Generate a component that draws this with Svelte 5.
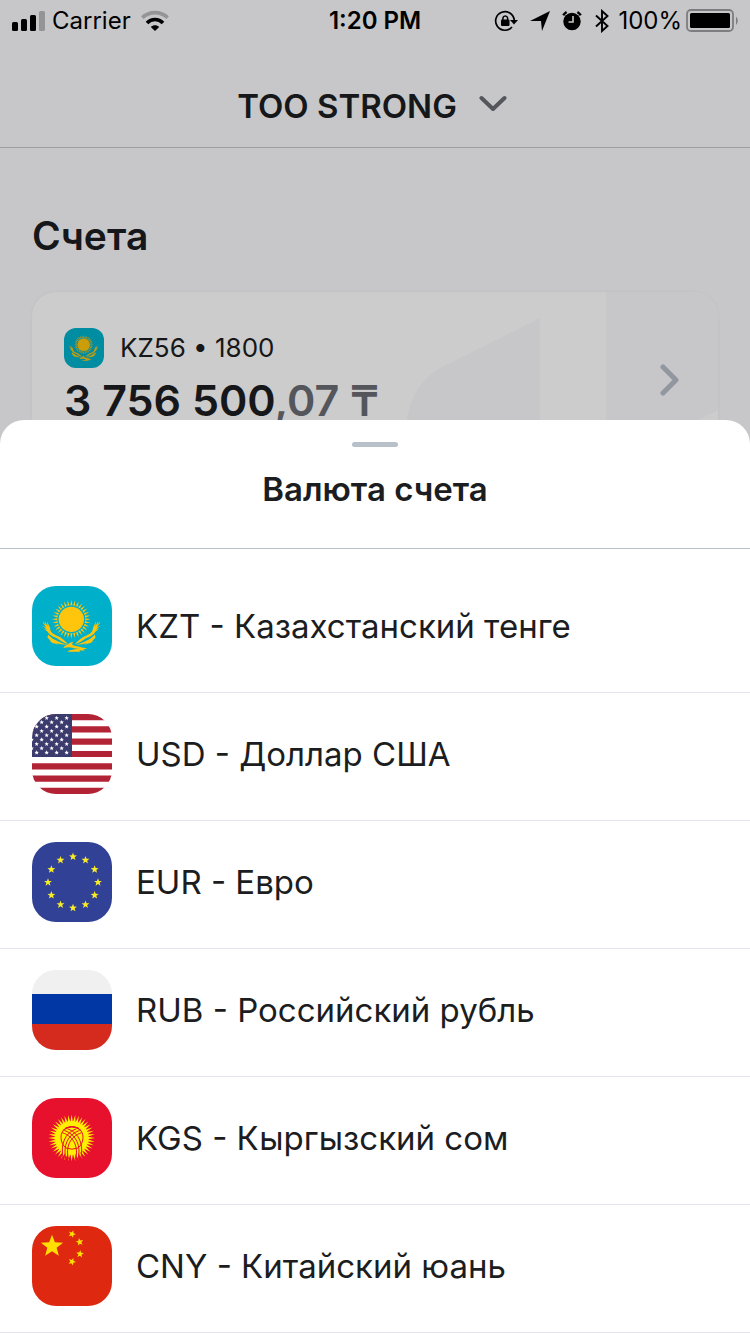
<script>
  const currencies = [
    { code: 'KZT', name: 'Казахстанский тенге' },
    { code: 'USD', name: 'Доллар США' },
    { code: 'EUR', name: 'Евро' },
    { code: 'RUB', name: 'Российский рубль' },
    { code: 'KGS', name: 'Кыргызский сом' },
    { code: 'CNY', name: 'Китайский юань' }
  ];

  const round = (n) => Math.round(n * 100) / 100;

  // Five-pointed star around (cx, cy), turned by `turn` degrees.
  function star(cx, cy, r, turn = 0) {
    const pts = [];
    for (let i = 0; i < 10; i++) {
      const a = ((i * 36 - 90 + turn) * Math.PI) / 180;
      const d = i % 2 ? r * 0.42 : r;
      pts.push(`${round(cx + d * Math.cos(a))},${round(cy + d * Math.sin(a))}`);
    }
    return pts.join(' ');
  }

  // Ring of pointed sun rays.
  function rays(cx, cy, inner, outer, count, width) {
    let d = '';
    for (let i = 0; i < count; i++) {
      const a = (i * 2 * Math.PI) / count - Math.PI / 2;
      const p = (r, t) => `${round(cx + r * Math.cos(t))} ${round(cy + r * Math.sin(t))}`;
      d += `M${p(inner, a - width)}L${p(outer, a)}L${p(inner, a + width)}Z`;
    }
    return d;
  }

  const usStars = [];
  for (let row = 0; row < 9; row++) {
    for (let col = 0; col < 4; col++) {
      usStars.push(star((row % 2 ? 35 : 50) + col * 30 - 36, 12 + row * 13, 7));
    }
  }

  const euStars = Array.from({ length: 12 }, (_, i) => {
    const a = (i * Math.PI) / 6;
    return star(123 + 75 * Math.cos(a), 121 + 77 * Math.sin(a), 12.5);
  });
</script>

{#snippet flag(code)}
  <svg class="flag" viewBox="0 0 240 240" aria-hidden="true">
    {#if code === 'KZT'}
      <rect width="240" height="240" fill="#00afca" />
      <g fill="#fec50c">
        <circle cx="118" cy="100" r="38" />
        <path d={rays(118, 100, 42, 58, 32, 0.075)} />
        <path d="M33 105 L41 119 L38 105 L47 121 L45 106 L54 126 C55 139 63 144 75 149 C89 154 98 163 108 174 C91 170 84 161 72 155 C61 151 51 145 47 137 L36 129 L45 131 L31 119 L43 125 L34 112 Z" />
        <path d="M204 105 L196 119 L199 105 L190 121 L192 106 L183 126 C182 139 174 144 162 149 C148 154 139 163 129 174 C146 170 153 161 165 155 C176 151 186 145 190 137 L201 129 L192 131 L206 119 L194 125 L203 112 Z" />
        <path d="M49 146 C63 162 78 164 91 172 L108 176 L86 175 L72 171 L81 177 L62 170 L68 175 L52 165 L58 167 L46 154 Z" />
        <path d="M188 146 C174 162 160 164 147 172 L130 176 L151 175 L165 171 L156 177 L175 170 L169 175 L185 165 L179 167 L191 154 Z" />
        <path d="M94 186 C98 177 106 178 114 170 L123 167 L120 176 C135 181 148 184 166 187 L153 191 L159 194 L141 193 L146 197 L106 197 L113 193 L130 190 L145 188 C128 190 119 183 109 184 Z" />
      </g>
    {:else if code === 'USD'}
      <rect width="240" height="240" fill="#fff" />
      <path
        fill="#b22335"
        d="M0 0H240V18.5H0ZM0 37H240V55.4H0ZM0 73.8H240V92.3H0ZM0 110.8H240V129.2H0ZM0 147.7H240V166.2H0ZM0 184.6H240V203H0ZM0 221.5H240V240H0Z"
      />
      <rect width="120" height="129" fill="#3c3b6e" />
      {#each usStars as points}<polygon {points} fill="#fff" />{/each}
    {:else if code === 'EUR'}
      <rect width="240" height="240" fill="#304196" />
      {#each euStars as points}<polygon {points} fill="#f9ec24" />{/each}
    {:else if code === 'RUB'}
      <rect width="240" height="240" fill="#f0f0f0" />
      <rect y="72" width="240" height="90" fill="#0037a5" />
      <rect y="162" width="240" height="78" fill="#d52b1e" />
    {:else if code === 'KGS'}
      <rect width="240" height="240" fill="#e8112d" />
      <path d={rays(119, 120, 48, 70, 40, 0.078)} fill="#ffef00" />
      <circle cx="119" cy="120" r="50" fill="#ffef00" />
      <g fill="none" stroke="#e8112d" stroke-width="3">
        <path d="M87 118C87 75 153 75 153 118C153 134 146 143 138 150Q120 157 102 150C94 143 87 134 87 118Z" />
        <path d="M93 97Q120 77 147 97M100 90Q120 81 140 90" />
        <path d="M94 184C84 140 98 104 134 92M102 186C92 144 106 110 143 97M110 184C100 150 112 116 149 104" />
        <path d="M146 184C156 140 142 104 106 92M138 186C148 144 134 110 97 97M130 184C140 150 128 116 91 104" />
      </g>
    {:else}
      <rect width="240" height="240" fill="#de2910" />
      <g fill="#ffde00">
        <polygon points={star(60, 61, 35)} />
        <polygon points={star(120, 24, 12, 20)} />
        <polygon points={star(143, 48, 12, -10)} />
        <polygon points={star(144, 84, 12, 5)} />
        <polygon points={star(120, 107, 12, 22)} />
      </g>
    {/if}
  </svg>
{/snippet}

<div class="screen">
  <main class="page">
    <header class="topbar">
      <button class="company" type="button">
        TOO STRONG
        <svg width="28" height="18" viewBox="0 0 28 18" aria-hidden="true">
          <path d="M2.500 3 14 14 25.500 3" fill="none" stroke="#696c73" stroke-width="4" stroke-linecap="round" stroke-linejoin="round" />
        </svg>
      </button>
    </header>

    <section class="accounts">
      <h1>Счета</h1>
      <a class="card" href="#account">
        <svg class="pattern" width="314" height="176" viewBox="0 0 314 176" aria-hidden="true">
          <path d="M136 26V176H2V140C2 112 16 85 40 74ZM202 0H314V118L202 176Z" fill="#f9f9fc" />
        </svg>
        <span class="summary">
          <span class="number">
            {@render flag('KZT')}
            KZ56 • 1800
          </span>
          <span class="balance">3 756 500<span class="minor">,07 ₸</span></span>
        </span>
        <svg class="go" width="20" height="32" viewBox="0 0 20 32" aria-hidden="true">
          <path d="M3 3 16 16 3 29" fill="none" stroke="#b6bdc6" stroke-width="5" stroke-linecap="round" stroke-linejoin="round" />
        </svg>
      </a>
    </section>
  </main>

  <div class="backdrop"></div>

  <div class="status">
    <div class="side">
      <svg width="34" height="22" viewBox="0 0 34 22" aria-hidden="true">
        <rect x="0" y="12" width="6" height="9" rx="1.5" />
        <rect x="9" y="9" width="6" height="12" rx="1.5" />
        <rect x="18" y="5" width="6" height="16" rx="1.5" />
        <rect x="27" y="1" width="6" height="20" rx="1.5" fill="#949496" />
      </svg>
      <span>Carrier</span>
      <svg class="wifi" width="28" height="22" viewBox="0 0 28 22" aria-hidden="true">
        <g fill="none" stroke-width="3.600">
          <path d="M1.300 7.600C8.500 .9 19.500 .9 26.700 7.600" stroke="#949496" />
          <path d="M6 13C10.500 8.300 17.500 8.300 22 13" stroke="#000" />
        </g>
        <path d="M14 21 9.800 17C12 14.600 16 14.600 18.200 17Z" />
      </svg>
    </div>
    <time>1:20 PM</time>
    <div class="side end">
      <svg width="24" height="22" viewBox="0 0 24 22" aria-hidden="true">
        <path d="M18 17A9.300 9.300 0 1 1 20.200 10" fill="none" stroke="#000" stroke-width="1.700" />
        <path d="M16 10H24L20 14.500Z" />
        <rect x="7" y="9.500" width="8.500" height="6.500" rx="1" />
        <path d="M8.900 10V8A2.400 2.600 0 0 1 13.600 8V10" fill="none" stroke="#000" stroke-width="1.500" />
      </svg>
      <svg width="20" height="22" viewBox="0 0 20 22" aria-hidden="true">
        <path d="M20 1 12 21 11 11H0Z" />
      </svg>
      <svg width="20" height="22" viewBox="0 0 20 22" aria-hidden="true">
        <circle cx="10" cy="11.500" r="8.700" />
        <path d="M1.200 5.200A13 13 0 0 1 4.600 1.900M15.400 1.900A13 13 0 0 1 18.800 5.200" fill="none" stroke="#000" stroke-width="2.400" />
        <path d="M11 6V12H6.500" fill="none" stroke="#c7c7c9" stroke-width="1.600" />
      </svg>
      <svg width="16" height="24" viewBox="0 0 16 24" aria-hidden="true">
        <path d="M2 6.500 13.500 17 8 22V2L13.500 7 2 17.500" fill="none" stroke="#000" stroke-width="1.900" />
      </svg>
      <span class="percent">100%</span>
      <svg width="54" height="24" viewBox="0 0 54 24" aria-hidden="true">
        <rect x="1" y="1" width="46" height="21" rx="4" fill="none" stroke="#7d7d7f" stroke-width="1.800" />
        <rect x="4" y="4" width="40" height="15" rx="1.500" />
        <path d="M50 7.500A6 6 0 0 1 50 16Z" fill="#7d7d7f" />
      </svg>
    </div>
  </div>

  <div class="sheet" role="dialog" aria-labelledby="sheet-title">
    <div class="sheet-head">
      <span class="grip"></span>
      <h2 id="sheet-title">Валюта счета</h2>
    </div>
    <ul>
      {#each currencies as { code, name }}
        <li>
          <button class="row" type="button">
            {@render flag(code)}
            <span>{code} - {name}</span>
          </button>
        </li>
      {/each}
    </ul>
  </div>
</div>

<style>
  :global(body) {
    margin: 0;
    background: #c7c7c9;
  }
  .screen {
    position: relative;
    min-height: 100vh;
    overflow: hidden;
    background: #f9f9fc;
    color: #1c1d21;
    font-family: Inter, "Liberation Sans", sans-serif;
  }
  button {
    padding: 0;
    border: 0;
    background: none;
    color: inherit;
    font: inherit;
    cursor: pointer;
  }
  svg {
    display: block;
    flex: none;
  }
  h1,
  h2 {
    margin: 0;
    font-weight: 600;
  }

  .status {
    position: absolute;
    inset: 0 0 auto;
    display: grid;
    grid-template-columns: 1fr auto 1fr;
    align-items: center;
    padding: 0 12px;
    color: #000;
    font-size: 24px;
    line-height: 41px;
  }
  .status time {
    font-weight: 600;
  }
  .side {
    display: flex;
    align-items: center;
    gap: 6px;
  }
  .wifi {
    margin-left: 4px;
  }
  .end {
    gap: 12px;
    justify-content: flex-end;
    margin-right: -2px;
  }
  .percent {
    margin: 0 -8px 0 -4px;
  }

  .topbar {
    display: flex;
    justify-content: center;
    box-sizing: border-box;
    height: 148px;
    padding-top: 84px;
    border-bottom: 1px solid #c6c6c9;
  }
  .company {
    display: flex;
    align-items: center;
    gap: 22px;
    height: 44px;
    margin-right: 6px;
    font-size: 33px;
    font-weight: 600;
  }
  .company svg {
    margin-bottom: 4px;
  }

  .accounts {
    padding: 64px 32px 0;
  }
  h1 {
    font-size: 39px;
    line-height: 48px;
  }
  .card {
    position: relative;
    display: flex;
    align-items: center;
    justify-content: space-between;
    box-sizing: border-box;
    height: 176px;
    margin-top: 32px;
    padding: 0 38px 0 32px;
    border-radius: 24px;
    overflow: hidden;
    background: #fff;
    box-shadow: 0 0 3px rgba(0, 0, 0, 0.06);
    color: inherit;
    text-decoration: none;
  }
  .pattern {
    position: absolute;
    top: 0;
    right: 0;
  }
  .summary {
    position: relative;
    display: flex;
    flex-direction: column;
    gap: 6px;
    align-self: flex-start;
    padding-top: 36px;
  }
  .go {
    position: relative;
  }
  .number {
    display: flex;
    align-items: center;
    gap: 16px;
    font-size: 26px;
    line-height: 40px;
  }
  .balance {
    font-size: 43px;
    font-weight: 600;
    line-height: 52px;
  }
  .minor {
    color: #696c73;
  }

  .flag {
    width: 80px;
    height: 80px;
    border-radius: 30%;
  }
  .number .flag {
    width: 40px;
    height: 40px;
  }

  .backdrop {
    position: absolute;
    inset: 0;
    background: rgba(0, 0, 0, 0.2);
  }

  .sheet {
    position: absolute;
    inset: auto 0 0;
    border-radius: 24px 24px 0 0;
    background: #fff;
  }
  .sheet-head {
    display: flex;
    flex-direction: column;
    align-items: center;
    gap: 20px;
    box-sizing: border-box;
    height: 129px;
    padding-top: 22px;
    border-bottom: 1px solid #b8bfc7;
  }
  .grip {
    width: 46px;
    height: 5px;
    border-radius: 3px;
    background: #b8c0c9;
  }
  h2 {
    font-size: 33px;
    line-height: 44px;
  }
  ul {
    margin: 0;
    padding: 16px 0 1px;
    list-style: none;
  }
  li {
    border-bottom: 1px solid #e5e5ec;
  }
  .row {
    display: flex;
    align-items: center;
    gap: 24px;
    width: 100%;
    padding: 21px 32px 26px;
    font-size: 33px;
    line-height: 44px;
    text-align: left;
  }
</style>
